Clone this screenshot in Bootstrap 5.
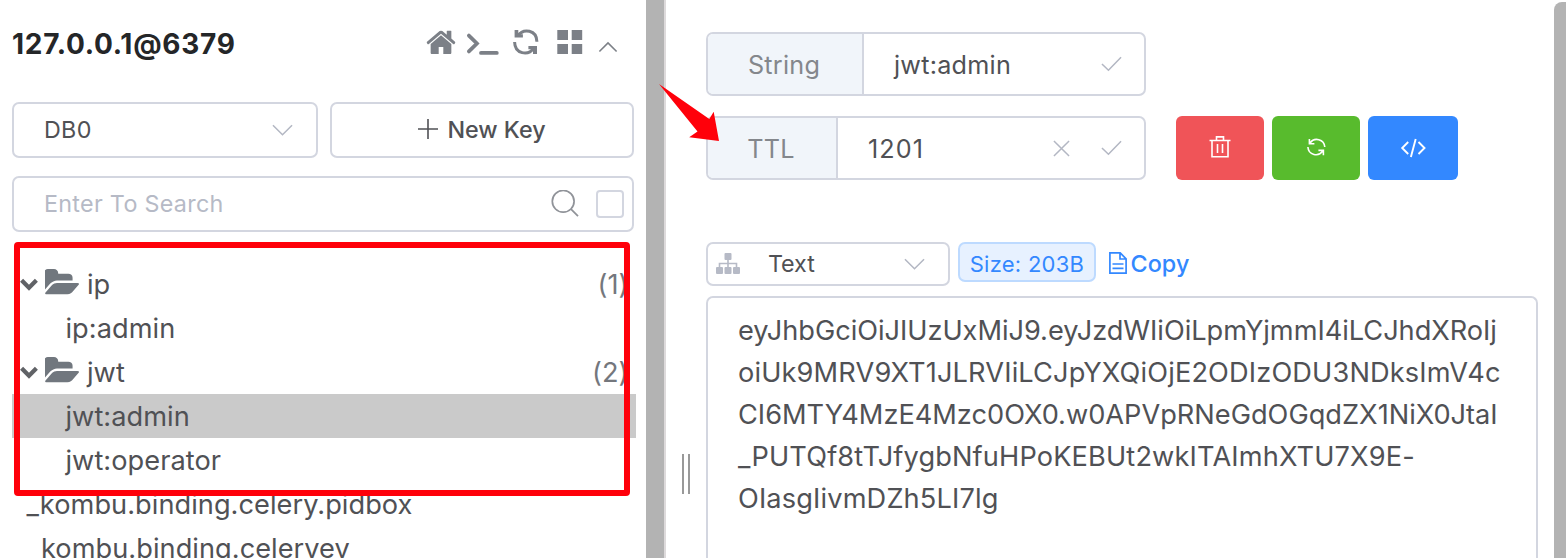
<!DOCTYPE html>
<html lang="en">
<head>
<meta charset="utf-8">
<meta name="viewport" content="width=device-width, initial-scale=1">
<title>Redis Manager</title>
<link href="https://cdn.jsdelivr.net/npm/bootstrap@5.3.0/dist/css/bootstrap.min.css" rel="stylesheet">
<style>
  body { font-family: Inter, "Liberation Sans", sans-serif; color: #505155; background: #fff; line-height: 1; }
  svg { display: block; flex: none; fill: none; }
  .sidebar { width: 646px; padding: 0 12px; }
  .drag-bar { width: 20px; background: #b3b3b3; border-right: 2px solid #dddadb; }
  .scroll-thumb { width: 12px; margin-top: 2px; background: #b3b3b3; border-top-left-radius: 8px; }
  .conn-head { height: 88px; padding-right: 16px; margin-bottom: 14px; color: #7c8087; }
  .conn-head svg { margin-top: -2px; }
  .conn-name { font-size: 28px; font-weight: 700; letter-spacing: .73px; color: #242628; }
  .field { border: 2px solid #d3d6e0; border-radius: 7px; background: #fff; }
  .t-md { font-size: 23.3px; letter-spacing: .3px; }
  .h-md { height: 56px; }
  .search-text { color: #b6bac6; }
  .check-square { width: 28px; height: 28px; border-radius: 4px; }
  .stroke-thin { stroke: #b3b7c3; stroke-width: 1.6; }
  .key-tree { margin: 30px -2px 0 0; height: 296px; font-size: 27.2px; letter-spacing: .04px; }
  .key-row { height: 44px; padding-top: 2px; white-space: nowrap; }
  .key-row svg { margin-top: -2px; }
  .key-row.leaf { padding-left: 53.5px; }
  .key-row.root-leaf { padding-left: 14.5px; }
  .key-row.root-leaf:last-child { padding-left: 29px; }
  .key-row.selected { background: #cacaca; }
  .key-count { color: #74777d; margin-right: 7.5px; }
  .mark-frame { left: 14px; top: 242px; width: 616px; height: 254px; border: 6px solid #ff000a; border-radius: 4px; }
  .mark-arrow { left: 657.5px; top: 82.5px; }
  .split-grip { width: 8px; height: 40px; margin: 454px 16px 0; border: solid #999; border-width: 0 2px; }
  .t-lg { font-size: 25.2px; letter-spacing: .25px; }
  .key-field { width: 440px; height: 64px; overflow: hidden; }
  .key-field .label-cell { background: #f1f5fa; color: #84878c; border-right: 2px solid #d3d6e0; padding: 3.5px 2px 0 0; }
  .key-field .value-cell { padding: 3.5px 22px 0 30px; }
  .key-field svg { margin-top: -3px; }
  .act { height: 64px; width: 88px; border-radius: 6px; }
  .act svg { stroke: #fff; stroke-width: 1.6; }
  .act-del { background: #f05458; } .act-ref { background: #58bb2d; } .act-code { background: #3388ff; width: 90px; }
  .size-tag { width: 138px; height: 40px; padding-top: 4px; font-size: 22px; letter-spacing: .26px; background: #e7f1ff; border: 2px solid #bddaff; border-radius: 7px; color: #3388ff; }
  .copy-link { color: #3388ff; font-weight: 500; letter-spacing: .1px; height: 42px; }
  .value-box { width: 832px; height: 262px; border-bottom: 0; border-radius: 7px 7px 0 0; margin-top: 10px; padding: 11.7px 30px; font-size: 27.2px; line-height: 42px; white-space: nowrap; }
  .ls-wide { letter-spacing: .14px; }
</style>
</head>
<body class="overflow-hidden">
<svg width="0" height="0" class="position-absolute">
  <defs>
    <symbol id="chev" viewBox="0 0 18 13"><path d="M1.600 2.200 9 9.800l7.400-7.600" stroke="#606266" stroke-width="4.200"/></symbol>
    <symbol id="folder" viewBox="0 128 1815 1408" preserveAspectRatio="none"><path fill="#71777e" d="M1815 952q0 31-31 66l-336 396q-43 51-120.500 86.500t-143.500 35.500h-1088q-34 0-60.500-13t-26.500-43q0-31 31-66l336-396q43-51 120.500-86.500t143.500-35.500h1088q34 0 60.500 13t26.500 43zm-343-344v160h-832q-94 0-197 47.500t-164 119.500l-337 396-5 6q0-4-.5-12.500t-.5-12.500v-960q0-92 66-158t158-66h320q92 0 158 66t66 158v32h544q92 0 158 66t66 158z"/></symbol>
    <symbol id="down" viewBox="0 0 22 12"><path d="M1 1l10 10L21 1"/></symbol>
    <symbol id="tick" viewBox="0 0 22 16"><path d="M1 8l6.800 6.500L21 1"/></symbol>
  </defs>
</svg>
<div class="d-flex vh-100 position-relative overflow-hidden">
  <aside class="sidebar flex-shrink-0 d-flex flex-column">
    <header class="conn-head d-flex align-items-center justify-content-between flex-shrink-0">
      <span class="conn-name">127.0.0.1@6379</span>
      <svg width="192" height="30" viewBox="426 28 192 30">
        <svg x="426.500" y="30.500" width="29" height="23.500" viewBox="89 253 1614 1283" preserveAspectRatio="none"><path fill="currentColor" d="M1472 992v480q0 26-19 45t-45 19h-384v-384h-256v384h-384q-26 0-45-19t-19-45v-480q0-1 .5-3t.5-3l575-474 575 474q1 2 1 6zm223-69l-62 74q-8 9-21 11h-3q-13 0-21-7l-692-577-692 577q-12 8-24 7-13-2-21-11l-62-74q-8-10-7-23.500t11-21.500l719-599q32-26 76-26t76 26l244 204v-195q0-14 9-23t23-9h192q14 0 23 9t9 23v408l219 182q10 8 11 21.500t-7 23.500z"/></svg>
        <path d="M468.900 35.600l8 7.900-8 7.900M481 52.900h15.800" stroke="currentColor" stroke-width="3.800" stroke-linecap="round"/>
        <path d="M517.500 36.200C523.500 27.500 536.800 30 536.900 41.800M514.600 42C514.800 54 528 56.500 534 47.800" stroke="currentColor" stroke-width="3"/>
        <path fill="currentColor" d="M514.600 30v7.500h8.300v-3.300h-4.600V30zM537 54v-8.100h-8.600v3.300h4.600V54z"/>
        <path fill="currentColor" d="M557.300 30h10.700v9.900h-10.700zM571.700 30h10.500v9.900h-10.500zM557.300 44h10.700v10h-10.700zM571.700 44h10.500v10h-10.500z"/>
        <path d="M599.400 51.500l8.600-8.600 8.600 8.600" stroke="currentColor" stroke-width="1.600"/>
      </svg>
    </header>
    <div class="d-flex flex-shrink-0 t-md">
      <div class="field h-md d-flex align-items-center justify-content-between" style="width:306px;padding:0 23px 0 30px">
        <span>DB0</span>
        <svg class="stroke-thin" width="21" height="12"><use href="#down" width="21" height="12"/></svg>
      </div>
      <button class="field h-md d-flex align-items-center justify-content-center p-0" type="button" style="width:304px;margin-left:12px;color:inherit;font-weight:500">
        <svg width="20" height="20" viewBox="0 0 20 20" stroke="#505155" stroke-width="1.600" style="margin-top:-2px"><path d="M10 0v20M0 10h20"/></svg>
        <span style="margin-left:9px">New Key</span>
      </button>
    </div>
    <div class="field h-md d-flex align-items-center flex-shrink-0 t-md search-text" style="margin-top:18px;padding:0 8px 0 30px">
      <span class="flex-grow-1">Enter To Search</span>
      <svg width="28" height="28" viewBox="551 190 28 28" stroke="#909399" stroke-width="1.700"><circle cx="563.200" cy="201.300" r="10.900"/><path d="M571 209.100l7 7"/></svg>
      <span class="field check-square" style="margin-left:17px"></span>
    </div>
    <div class="key-tree flex-shrink-0 overflow-hidden">
      <div class="key-row d-flex align-items-center">
        <svg width="18" height="13" style="margin-left:7.500px"><use href="#chev" width="18" height="13"/></svg>
        <svg width="34" height="25.500" style="margin:-6px 8px 0 7.500px"><use href="#folder" width="34" height="25.500"/></svg>
        <span class="flex-grow-1">ip</span><span class="key-count">(1)</span>
      </div>
      <div class="key-row leaf d-flex align-items-center">ip:admin</div>
      <div class="key-row d-flex align-items-center">
        <svg width="18" height="13" style="margin-left:7.500px"><use href="#chev" width="18" height="13"/></svg>
        <svg width="34" height="25.500" style="margin:-6px 8px 0 7.500px"><use href="#folder" width="34" height="25.500"/></svg>
        <span class="flex-grow-1">jwt</span><span class="key-count">(2)</span>
      </div>
      <div class="key-row leaf selected d-flex align-items-center">jwt:admin</div>
      <div class="key-row leaf d-flex align-items-center">jwt:operator</div>
      <div class="key-row root-leaf d-flex align-items-center">_kombu.binding.celery.pidbox</div>
      <div class="key-row root-leaf d-flex align-items-center">kombu.binding.celeryev</div>
    </div>
  </aside>
  <div class="drag-bar flex-shrink-0"></div>
  <div class="split-grip flex-shrink-0"></div>
  <main class="flex-grow-1" style="padding-top:32px">
    <div class="field key-field d-flex t-lg">
      <span class="label-cell d-flex align-items-center justify-content-center" style="width:156px">String</span>
      <span class="value-cell flex-grow-1 d-flex align-items-center justify-content-between">jwt:admin
        <svg class="stroke-thin" width="21" height="16"><use href="#tick" width="21" height="16"/></svg></span>
    </div>
    <div class="d-flex" style="margin-top:20px">
      <div class="field key-field d-flex t-lg">
        <span class="label-cell d-flex align-items-center justify-content-center" style="width:130px">TTL</span>
        <span class="value-cell flex-grow-1 d-flex align-items-center"><span class="flex-grow-1" style="letter-spacing:1.100px">1201</span>
          <svg class="stroke-thin" width="17" height="17" viewBox="0 0 18 18"><path d="M1 1l16 16M17 1L1 17"/></svg>
          <svg class="stroke-thin" width="21" height="16" style="margin-left:31.500px"><use href="#tick" width="21" height="16"/></svg></span>
      </div>
      <div class="d-flex gap-2" style="margin-left:30px">
        <button class="btn act act-del p-0 border-0 d-flex align-items-center justify-content-center" type="button" aria-label="Delete">
          <svg width="22" height="24" viewBox="1209 136 22 24"><path d="M1209.500 140.500h21M1216.500 140v-3.100h7v3.100M1212 141v15.800h16V141M1217.500 144v9M1222.500 144v9"/></svg></button>
        <button class="btn act act-ref p-0 border-0 d-flex align-items-center justify-content-center" type="button" aria-label="Refresh">
          <svg width="22" height="22" viewBox="1305.300 137 22 22"><path d="M1309.700 139v4.800h5M1310.200 143.200c4.500-6.500 14.300-4 14.900 3.800M1308.200 147c.5 8 10.500 10.500 15 3.800M1323.700 155.200v-4.800h-5"/></svg></button>
        <button class="btn act act-code p-0 border-0 d-flex align-items-center justify-content-center" type="button" aria-label="Code">
          <svg width="26" height="20" viewBox="1400.300 138.300 26 20" style="stroke-width:1.900"><path d="M1408.500 142.300l-6 6 6 6M1418.800 142.300l6 6-6 6M1416 139.400l-4.800 18"/></svg></button>
      </div>
    </div>
    <div class="d-flex t-md" style="margin-top:62px">
      <div class="field d-flex align-items-center" style="width:244px;height:44px;padding:0 23px 0 8px">
        <svg width="24" height="21" viewBox="0 0 24 21" style="margin-top:-1px"><path fill="#b6bac6" d="M9.500 0h5a1 1 0 0 1 1 1v5a1 1 0 0 1-1 1h-5a1 1 0 0 1-1-1V1a1 1 0 0 1 1-1zM1 14h5a1 1 0 0 1 1 1v5a1 1 0 0 1-1 1H1a1 1 0 0 1-1-1v-5a1 1 0 0 1 1-1zM9.500 14h5a1 1 0 0 1 1 1v5a1 1 0 0 1-1 1h-5a1 1 0 0 1-1-1v-5a1 1 0 0 1 1-1zM18 14h5a1 1 0 0 1 1 1v5a1 1 0 0 1-1 1h-5a1 1 0 0 1-1-1v-5a1 1 0 0 1 1-1z"/><path d="M12 6v8M3.500 14v-3.500h17V14" stroke="#b6bac6" stroke-width="1.600"/></svg>
        <span class="flex-grow-1" style="margin-left:28px;letter-spacing:-.100px">Text</span>
        <svg class="stroke-thin" width="21" height="12"><use href="#down" width="21" height="12"/></svg>
      </div>
      <span class="size-tag ms-2 d-flex align-items-center justify-content-center">Size: 203B</span>
      <a class="copy-link d-flex align-items-center text-decoration-none" href="#" style="margin-left:13px">
        <svg width="18" height="22" viewBox="0 0 18 22" stroke="#3388ff" stroke-width="1.700"><path d="M.9.900h10.300l5.900 5.900v14.300H.9zM11 1v6h6M3.500 12h11M3.500 16.300h11"/></svg>
        <span style="margin:2px 0 0 3.500px">Copy</span></a>
    </div>
    <div class="field value-box">
      <div style="letter-spacing:-.040px">eyJhbGciOiJIUzUxMiJ9.eyJzdWIiOiLpmYjmmI4iLCJhdXRoIj</div>
      <div class="ls-wide">oiUk9MRV9XT1JLRVIiLCJpYXQiOjE2ODIzODU3NDksImV4c</div>
      <div>CI6MTY4MzE4Mzc0OX0.w0APVpRNeGdOGqdZX1NiX0JtaI</div>
      <div class="ls-wide">_PUTQf8tTJfygbNfuHPoKEBUt2wkITAImhXTU7X9E-</div>
      <div class="ls-wide">OIasgIivmDZh5LI7lg</div>
    </div>
  </main>
  <div class="scroll-thumb flex-shrink-0"></div>
  <div class="mark-frame position-absolute"></div>
  <svg class="mark-arrow position-absolute" width="62" height="60" viewBox="658 83 62 60"><path fill="#ff000a" d="M659 84l50.300 35 4.400-7.300L719 141l-29.800-3.800 8.300-5.700z"/></svg>
</div>
<script src="https://cdn.jsdelivr.net/npm/bootstrap@5.3.0/dist/js/bootstrap.bundle.min.js"></script>
</body>
</html>
